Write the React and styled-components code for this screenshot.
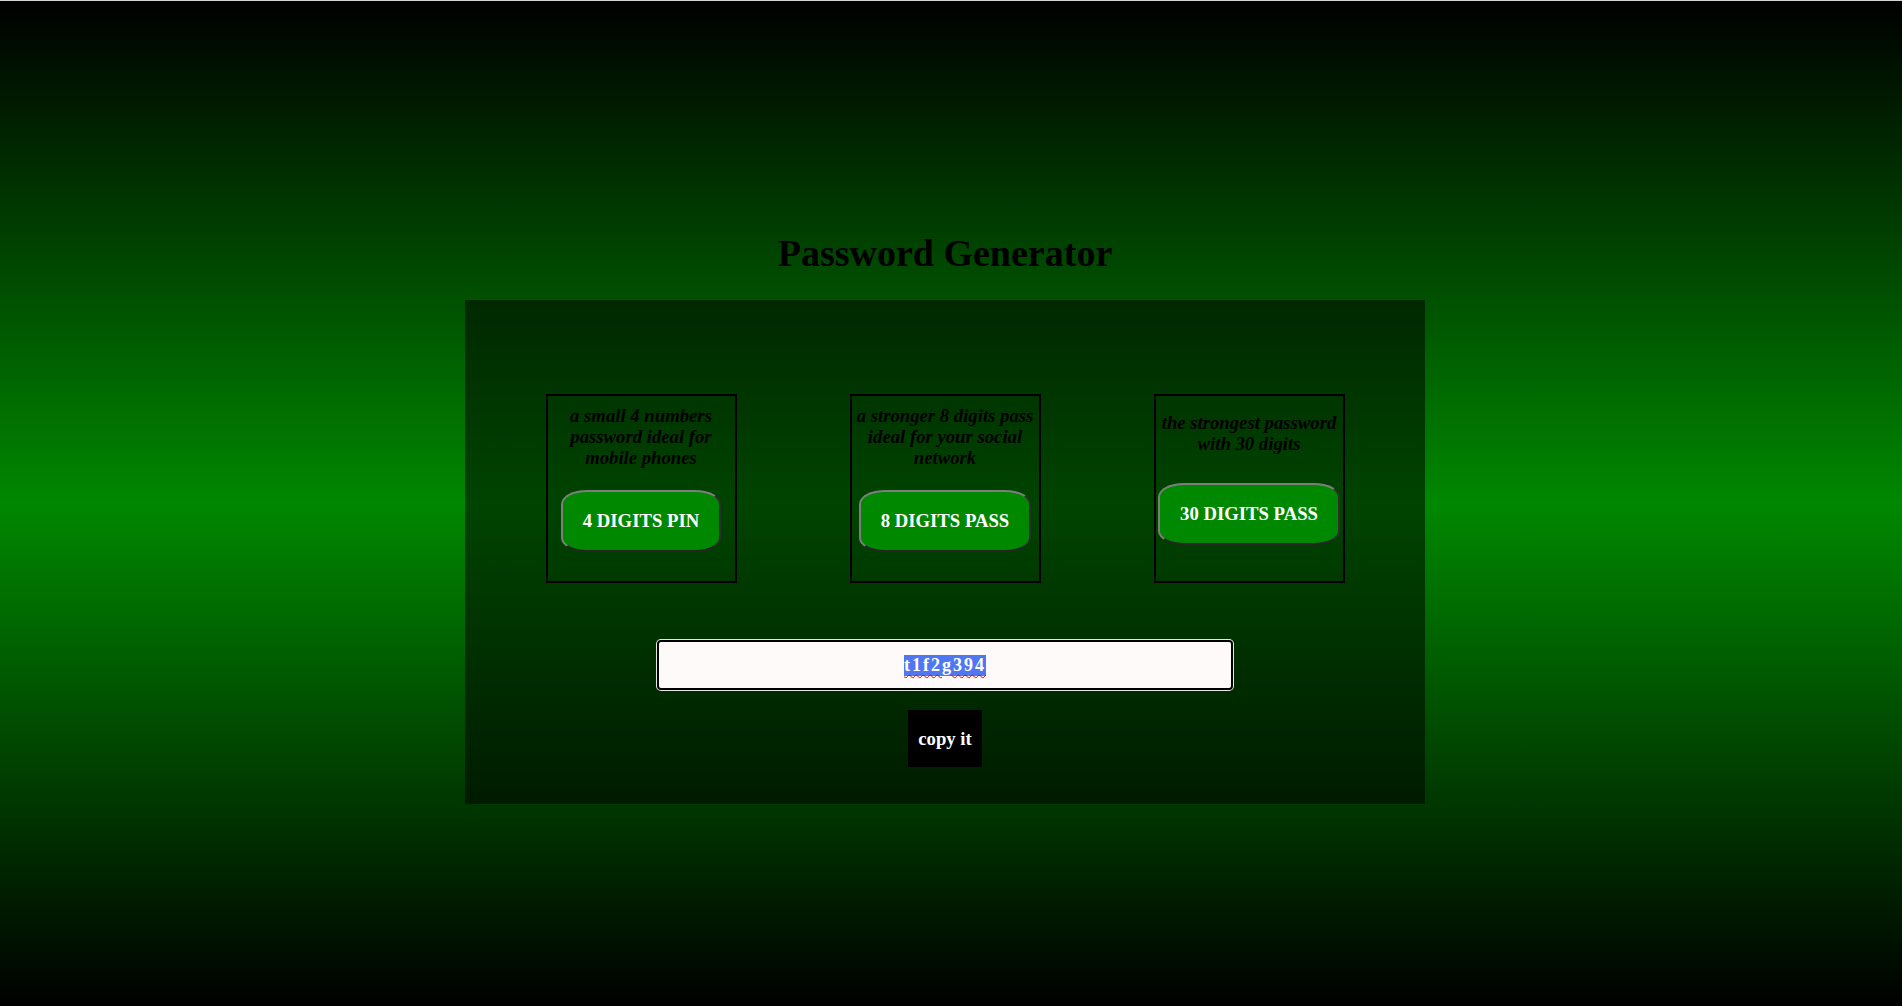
import React from "react";
import styled, { createGlobalStyle } from "styled-components";

const GlobalStyle = createGlobalStyle`
  html, body {
    margin: 0;
    padding: 0;
  }
  body {
    font-family: "Liberation Serif", "Times New Roman", serif;
  }
`;

const Page = styled.div`
  box-sizing: border-box;
  min-height: 100vh;
  border-top: 1px solid #d4d4d4;
  padding: 230px 12px 0 0;
  background: linear-gradient(to bottom, #000 0%, #008800 50%, #000 100%);
  display: flex;
  flex-direction: column;
  align-items: center;
`;

const Title = styled.h1`
  margin: 0 0 25px;
  font-size: 38px;
  line-height: 44px;
  font-weight: bold;
  color: #000;
`;

const Panel = styled.div`
  box-sizing: border-box;
  width: 960px;
  padding: 94px 0 37px;
  background: rgba(0, 0, 0, 0.5);
  display: flex;
  flex-direction: column;
  align-items: center;
`;

const CardRow = styled.div`
  display: flex;
  justify-content: center;
  gap: 113px;
  margin-bottom: 57px;
`;

const Card = styled.div`
  box-sizing: border-box;
  width: 191px;
  height: 189px;
  border: 2px solid #000;
  display: flex;
  flex-direction: column;
  align-items: center;
  justify-content: space-evenly;
  text-align: center;
`;

const CardText = styled.h3`
  margin: 0 0 13px;
  font-size: 18.72px;
  line-height: 21px;
  font-style: italic;
  font-weight: bold;
  color: #000;
`;

const DigitButton = styled.button`
  margin: 0 0 20px;
  padding: 18px 20px;
  font-family: "Liberation Serif", "Times New Roman", serif;
  font-size: 18.72px;
  font-weight: bold;
  color: #fff;
  background: #008800;
  border-width: 2px;
  border-style: solid;
  border-color: #7d7d7d #2e2e2e #262626 #7d7d7d;
  border-radius: 26px / 14px;
  cursor: pointer;
`;

const Output = styled.div`
  box-sizing: border-box;
  width: 576px;
  height: 50px;
  margin-bottom: 20px;
  border: 2px solid #000;
  border-radius: 4px;
  box-shadow: 0 0 0 1px #e6e6e6;
  background: #fffafa;
  display: flex;
  align-items: center;
  justify-content: center;
  font-size: 18px;
  font-weight: bold;
  letter-spacing: 2px;
  color: #000;
`;

const Selected = styled.span`
  background: #5077f2;
  color: #fff;
  text-decoration: underline wavy #e00000;
  text-decoration-thickness: 1px;
  text-underline-offset: 3px;
`;

const CopyButton = styled.button`
  padding: 17.5px 10px;
  border: none;
  background: #000;
  color: #fff;
  font-family: "Liberation Serif", "Times New Roman", serif;
  font-size: 18.72px;
  font-weight: bold;
  cursor: pointer;
`;

const options = [
  { text: "a small 4 numbers password ideal for mobile phones", label: "4 DIGITS PIN" },
  { text: "a stronger 8 digits pass ideal for your social network", label: "8 DIGITS PASS" },
  { text: "the strongest password with 30 digits", label: "30 DIGITS PASS" },
];

const App = () => {
  return (
    <Page>
      <GlobalStyle />
      <Title>Password Generator</Title>
      <Panel>
        <CardRow>
          {options.map((opt) => (
            <Card key={opt.label}>
              <CardText>{opt.text}</CardText>
              <DigitButton>{opt.label}</DigitButton>
            </Card>
          ))}
        </CardRow>
        <Output role="textbox">
          <Selected>t1f2g394</Selected>
        </Output>
        <CopyButton>copy it</CopyButton>
      </Panel>
    </Page>
  );
};

export default App;
